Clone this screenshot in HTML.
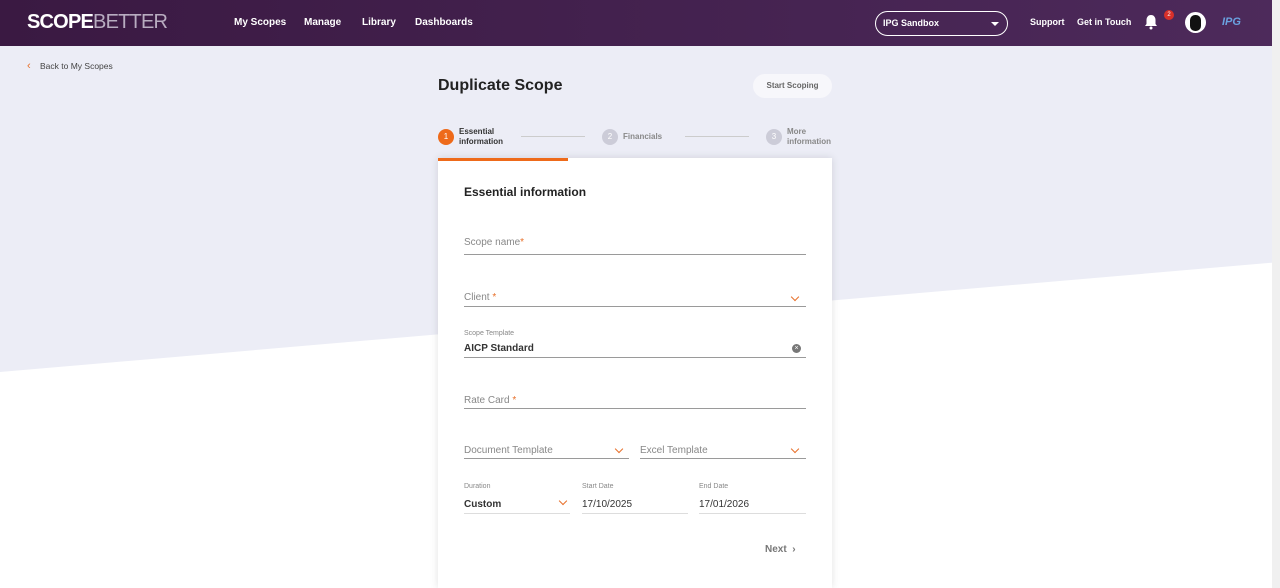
<!DOCTYPE html>
<html><head><meta charset="utf-8"><style>
*{margin:0;padding:0;box-sizing:border-box}
body{width:1280px;height:588px;overflow:hidden;font-family:"Liberation Sans",sans-serif;position:relative;background:#fff}
.bg{position:absolute;left:0;top:46px;width:1280px;height:542px;background:#ecedf6;clip-path:polygon(0 0,100% 0,100% 216px,0 326px)}
.hdr{position:absolute;left:0;top:0;width:1280px;height:46px;background:linear-gradient(90deg,#3a1942,#4d2a5b)}
.logo{position:absolute;left:27px;top:11px;font-size:20px;font-weight:bold;letter-spacing:-0.8px;color:#fff}
.logo span{color:#b8acc0;font-weight:normal}
.nav{position:absolute;top:17px;font-size:10px;font-weight:bold;color:#fff}
.sel{position:absolute;left:875px;top:11px;width:133px;height:25px;border:1.5px solid #fff;border-radius:13px;color:#fff;font-size:9px;font-weight:bold;padding:6px 0 0 7px}
.sel:after{content:"";position:absolute;right:8px;top:10px;border:4px solid transparent;border-top:4px solid #fff}
.sm{position:absolute;top:17px;font-size:9px;font-weight:bold;color:#fff}
.card{position:absolute;left:438px;top:158px;width:394px;height:430px;background:#fff;box-shadow:0 0 8px rgba(0,0,0,.12)}
.fld{position:absolute;border-bottom:1px solid #9a9a9a;font-size:10px;color:#888;padding-top:1px}
.lab{position:absolute;font-size:7px;color:#888}
.val{position:absolute;font-size:10px;font-weight:bold;color:#333}
.chev{position:absolute;width:6px;height:6px;border-right:1.5px solid #e8702a;border-bottom:1.5px solid #e8702a;transform:rotate(45deg)}
.st{color:#e8702a}
</style></head><body>
<div class="bg"></div>
<div class="hdr">
<div class="logo">SCOPE<span>BETTER</span></div>
<div class="nav" style="left:234px">My Scopes</div>
<div class="nav" style="left:304px">Manage</div>
<div class="nav" style="left:362px">Library</div>
<div class="nav" style="left:415px">Dashboards</div>
<div class="sel">IPG Sandbox</div>
<div class="sm" style="left:1030px">Support</div>
<div class="sm" style="left:1077px">Get in Touch</div>
<svg style="position:absolute;left:1142px;top:13px" width="18" height="18" viewBox="0 0 18 18"><path d="M9 2c-3 0-4.5 2.5-4.5 5v4L3 13h12l-1.5-2V7C13.5 4.5 12 2 9 2z" fill="#fff"/><circle cx="9" cy="15" r="1.5" fill="#fff"/></svg>
<div style="position:absolute;left:1164px;top:10px;width:10px;height:10px;border-radius:5px;background:#d8302a;color:#fff;font-size:6px;text-align:center;line-height:10px">2</div>
<div style="position:absolute;left:1185px;top:12px;width:21px;height:21px;border-radius:11px;background:#fff"><div style="position:absolute;left:5px;top:3px;width:11px;height:16px;border-radius:5px;background:#111"></div></div>
<div style="position:absolute;left:1222px;top:16px;font-size:11px;font-weight:bold;color:#6aa2e0;font-style:italic">IPG</div>
</div>
<div style="position:absolute;left:27px;top:60px;font-size:11px;color:#e8702a">&#8249;</div>
<div style="position:absolute;left:40px;top:61px;font-size:8.5px;color:#444">Back to My Scopes</div>
<div style="position:absolute;left:438px;top:77px;font-size:16px;font-weight:bold;color:#222">Duplicate Scope</div>
<div style="position:absolute;left:753px;top:74px;width:79px;height:24px;border-radius:12px;background:#f7f7fb;font-size:8px;color:#666;font-weight:bold;text-align:center;line-height:24px">Start Scoping</div>
<div style="position:absolute;left:438px;top:129px;width:16px;height:16px;border-radius:8px;background:#ee6a1a;color:#fff;font-size:8px;text-align:center;line-height:16px">1</div>
<div style="position:absolute;left:459px;top:127px;font-size:8px;line-height:10px;color:#333;font-weight:bold">Essential<br>information</div>
<div style="position:absolute;left:521px;top:136px;width:64px;height:1px;background:#ccc"></div>
<div style="position:absolute;left:602px;top:129px;width:16px;height:16px;border-radius:8px;background:#ccccd8;color:#fff;font-size:8px;text-align:center;line-height:16px">2</div>
<div style="position:absolute;left:623px;top:132px;font-size:8px;color:#888;font-weight:bold">Financials</div>
<div style="position:absolute;left:685px;top:136px;width:64px;height:1px;background:#ccc"></div>
<div style="position:absolute;left:766px;top:129px;width:16px;height:16px;border-radius:8px;background:#ccccd8;color:#fff;font-size:8px;text-align:center;line-height:16px">3</div>
<div style="position:absolute;left:787px;top:127px;font-size:8px;line-height:10px;color:#888;font-weight:bold">More<br>information</div>
<div class="card">
<div style="position:absolute;left:0;top:0;width:130px;height:3px;background:#ee6a1a"></div>
<div style="position:absolute;left:26px;top:27px;font-size:12px;font-weight:bold;color:#222">Essential information</div>
<div class="fld" style="left:26px;top:78px;width:342px;height:19px">Scope name<span class="st">*</span></div>
<div class="fld" style="left:26px;top:133px;width:342px;height:16px">Client <span class="st">*</span></div>
<div class="chev" style="left:354px;top:136px"></div>
<div class="lab" style="left:26px;top:172px">Scope Template</div>
<div class="fld" style="left:26px;top:183px;width:342px;height:17px"></div>
<div class="val" style="left:26px;top:185px">AICP Standard</div>
<div style="position:absolute;left:354px;top:186px;width:9px;height:9px;border-radius:5px;background:#777;color:#fff;font-size:7px;line-height:9px;text-align:center">×</div>
<div class="fld" style="left:26px;top:236px;width:342px;height:15px">Rate Card <span class="st">*</span></div>
<div class="fld" style="left:26px;top:286px;width:165px;height:15px">Document Template</div>
<div class="chev" style="left:178px;top:288px"></div>
<div class="fld" style="left:202px;top:286px;width:166px;height:15px">Excel Template</div>
<div class="chev" style="left:354px;top:288px"></div>
<div class="lab" style="left:26px;top:325px">Duration</div>
<div class="lab" style="left:144px;top:325px">Start Date</div>
<div class="lab" style="left:261px;top:325px">End Date</div>
<div class="fld" style="left:26px;top:339px;width:106px;height:17px;border-color:#ddd"></div>
<div class="fld" style="left:144px;top:339px;width:106px;height:17px;border-color:#ddd"></div>
<div class="fld" style="left:261px;top:339px;width:107px;height:17px;border-color:#ddd"></div>
<div class="val" style="left:26px;top:341px">Custom</div>
<div class="chev" style="left:122px;top:340px"></div>
<div class="val" style="left:144px;top:341px;font-weight:normal;color:#333">17/10/2025</div>
<div class="val" style="left:261px;top:341px;font-weight:normal;color:#333">17/01/2026</div>
<div style="position:absolute;left:327px;top:386px;font-size:10px;color:#777;font-weight:bold">Next &nbsp;&#8250;</div>
</div>
<div style="position:absolute;left:1272px;top:0;width:8px;height:588px;background:#f0f0f0"></div>
</body></html>
